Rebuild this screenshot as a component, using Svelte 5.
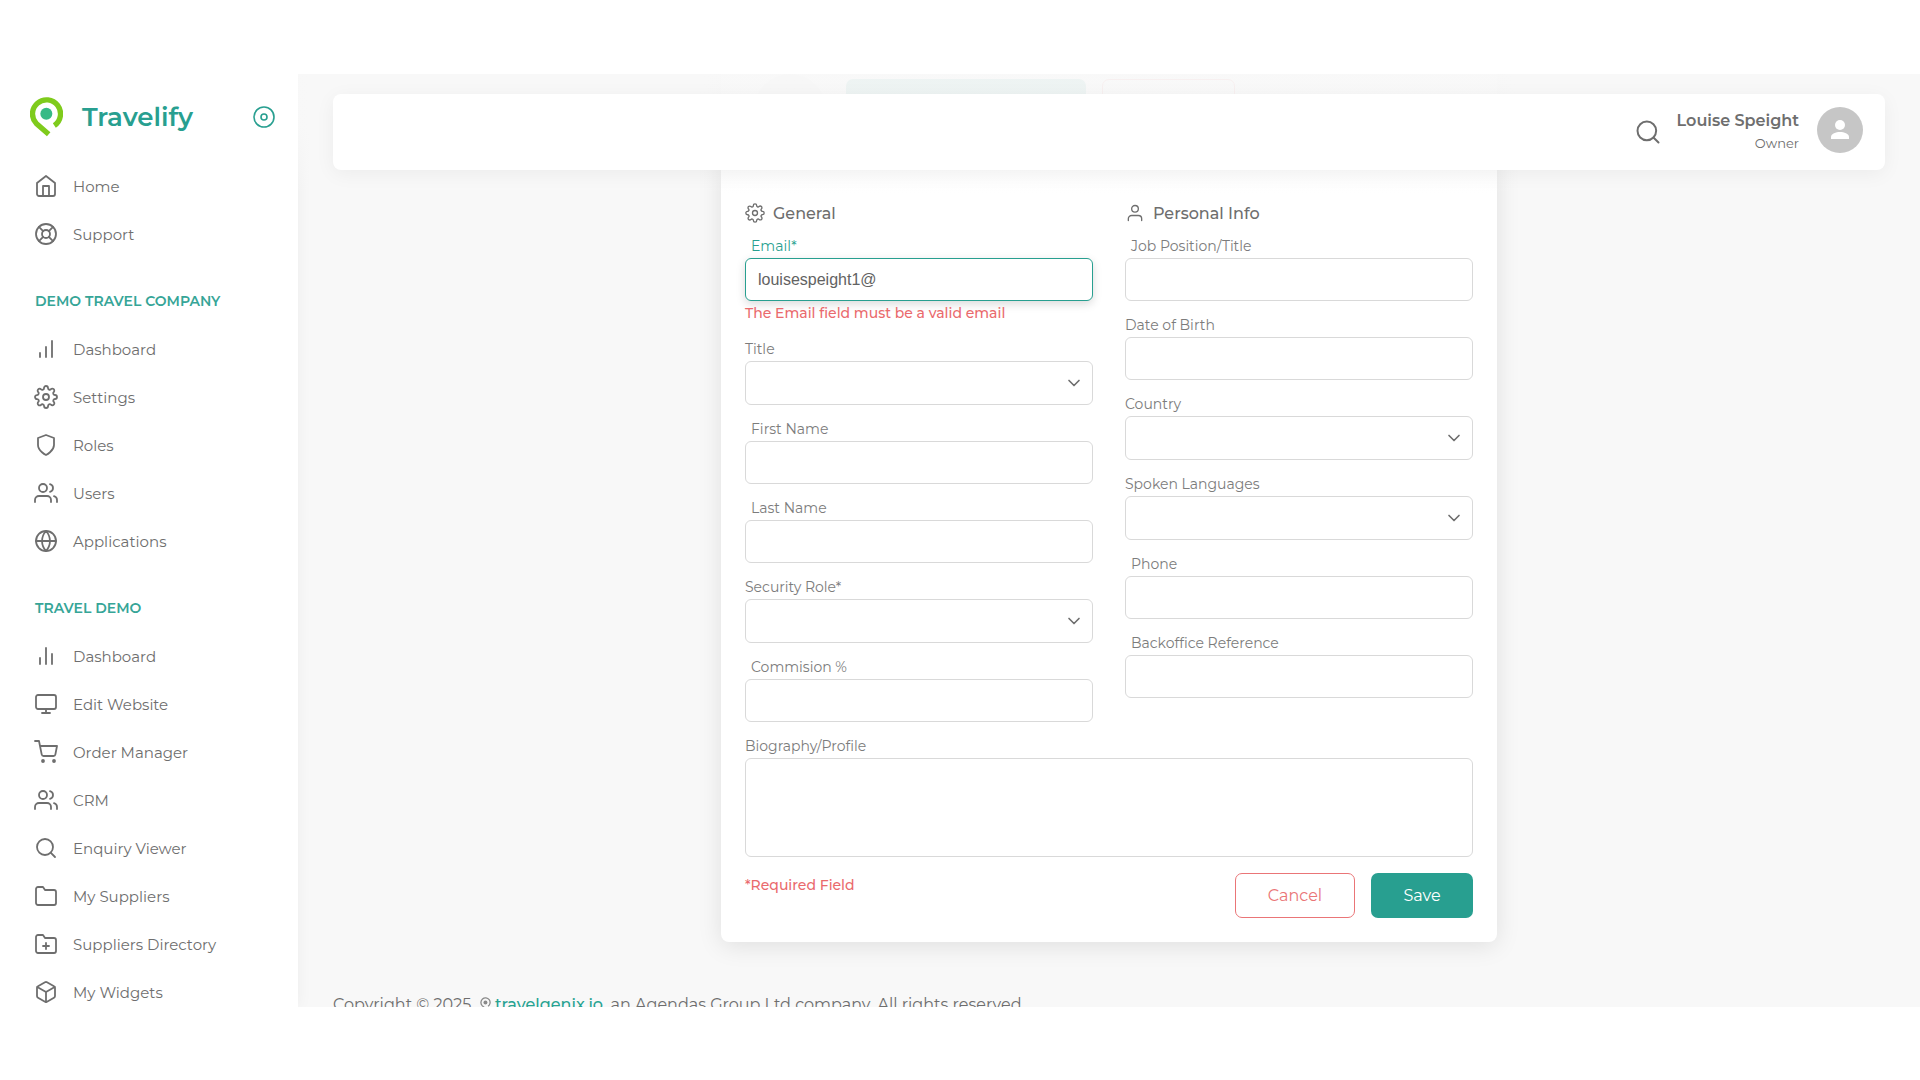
<script>
  const icons = {
    home: '<path d="M3 9l9-7 9 7v11a2 2 0 0 1-2 2H5a2 2 0 0 1-2-2z"/><path d="M9 22V12h6v10"/>',
    support:
      '<circle cx="12" cy="12" r="10"/><circle cx="12" cy="12" r="4"/><path d="M4.93 4.93l4.24 4.24M14.83 14.83l4.24 4.24M14.83 9.17l4.24-4.24M4.93 19.07l4.24-4.24"/>',
    bars: '<path d="M12 20V10M18 20V4M6 20v-4"/>',
    bars2: '<path d="M18 20V10M12 20V4M6 20v-6"/>',
    settings:
      '<circle cx="12" cy="12" r="3"/><path d="M19.4 15a1.65 1.65 0 0 0 .33 1.82l.06.06a2 2 0 0 1 0 2.83 2 2 0 0 1-2.83 0l-.06-.06a1.65 1.65 0 0 0-1.82-.33 1.65 1.65 0 0 0-1 1.51V21a2 2 0 0 1-2 2 2 2 0 0 1-2-2v-.09A1.65 1.65 0 0 0 9 19.4a1.65 1.65 0 0 0-1.82.33l-.06.06a2 2 0 0 1-2.83 0 2 2 0 0 1 0-2.83l.06-.06a1.65 1.65 0 0 0 .33-1.82 1.65 1.65 0 0 0-1.51-1H3a2 2 0 0 1-2-2 2 2 0 0 1 2-2h.09A1.65 1.65 0 0 0 4.6 9a1.65 1.65 0 0 0-.33-1.82l-.06-.06a2 2 0 0 1 0-2.83 2 2 0 0 1 2.83 0l.06.06a1.65 1.65 0 0 0 1.82.33H9a1.65 1.65 0 0 0 1-1.51V3a2 2 0 0 1 2-2 2 2 0 0 1 2 2v.09a1.65 1.65 0 0 0 1 1.51 1.65 1.65 0 0 0 1.82-.33l.06-.06a2 2 0 0 1 2.83 0 2 2 0 0 1 0 2.83l-.06.06a1.65 1.65 0 0 0-.33 1.82V9a1.65 1.65 0 0 0 1.51 1H21a2 2 0 0 1 2 2 2 2 0 0 1-2 2h-.09a1.65 1.65 0 0 0-1.51 1z"/>',
    shield: '<path d="M12 22s8-4 8-10V5l-8-3-8 3v7c0 6 8 10 8 10z"/>',
    users:
      '<path d="M17 21v-2a4 4 0 0 0-4-4H5a4 4 0 0 0-4 4v2"/><circle cx="9" cy="7" r="4"/><path d="M23 21v-2a4 4 0 0 0-3-3.87M16 3.13a4 4 0 0 1 0 7.75"/>',
    globe:
      '<circle cx="12" cy="12" r="10"/><path d="M2 12h20M12 2a15.3 15.3 0 0 1 4 10 15.3 15.3 0 0 1-4 10 15.3 15.3 0 0 1-4-10 15.3 15.3 0 0 1 4-10z"/>',
    monitor: '<rect x="2" y="3" width="20" height="14" rx="2"/><path d="M8 21h8M12 17v4"/>',
    cart: '<circle cx="9" cy="21" r="1"/><circle cx="20" cy="21" r="1"/><path d="M1 1h4l2.68 13.39a2 2 0 0 0 2 1.61h9.72a2 2 0 0 0 2-1.61L23 6H6"/>',
    search: '<circle cx="11" cy="11" r="8"/><path d="M21 21l-4.35-4.35"/>',
    folder: '<path d="M22 19a2 2 0 0 1-2 2H4a2 2 0 0 1-2-2V5a2 2 0 0 1 2-2h5l2 3h9a2 2 0 0 1 2 2z"/>',
    folderPlus:
      '<path d="M22 19a2 2 0 0 1-2 2H4a2 2 0 0 1-2-2V5a2 2 0 0 1 2-2h5l2 3h9a2 2 0 0 1 2 2zM12 11v6M9 14h6"/>',
    box: '<path d="M21 16V8a2 2 0 0 0-1-1.73l-7-4a2 2 0 0 0-2 0l-7 4A2 2 0 0 0 3 8v8a2 2 0 0 0 1 1.73l7 4a2 2 0 0 0 2 0l7-4A2 2 0 0 0 21 16z"/><path d="M3.27 6.96L12 12.01l8.73-5.05M12 22.08V12"/>',
    user: '<path d="M20 21v-2a4 4 0 0 0-4-4H8a4 4 0 0 0-4 4v2"/><circle cx="12" cy="7" r="4"/>',
    disc: '<circle cx="12" cy="12" r="10"/><circle cx="12" cy="12" r="3"/>',
    chevron: '<path d="M6 9l6 6 6-6"/>',
  };

  const nav = [
    {
      title: '',
      items: [
        ['home', 'Home'],
        ['support', 'Support'],
      ],
    },
    {
      title: 'DEMO TRAVEL COMPANY',
      items: [
        ['bars', 'Dashboard'],
        ['settings', 'Settings'],
        ['shield', 'Roles'],
        ['users', 'Users'],
        ['globe', 'Applications'],
      ],
    },
    {
      title: 'TRAVEL DEMO',
      items: [
        ['bars2', 'Dashboard'],
        ['monitor', 'Edit Website'],
        ['cart', 'Order Manager'],
        ['users', 'CRM'],
        ['search', 'Enquiry Viewer'],
        ['folder', 'My Suppliers'],
        ['folderPlus', 'Suppliers Directory'],
        ['box', 'My Widgets'],
      ],
    },
  ];

  const columns = [
    {
      icon: 'settings',
      heading: 'General',
      fields: [
        {
          id: 'email',
          label: 'Email*',
          type: 'text',
          inset: true,
          active: true,
          value: 'louisespeight1@',
          error: 'The Email field must be a valid email',
        },
        { id: 'title', label: 'Title', type: 'select' },
        { id: 'first', label: 'First Name', type: 'text', inset: true },
        { id: 'last', label: 'Last Name', type: 'text', inset: true },
        { id: 'role', label: 'Security Role*', type: 'select' },
        { id: 'commission', label: 'Commision %', type: 'text', inset: true },
      ],
    },
    {
      icon: 'user',
      heading: 'Personal Info',
      fields: [
        { id: 'job', label: 'Job Position/Title', type: 'text', inset: true },
        { id: 'dob', label: 'Date of Birth', type: 'text' },
        { id: 'country', label: 'Country', type: 'select' },
        { id: 'languages', label: 'Spoken Languages', type: 'select' },
        { id: 'phone', label: 'Phone', type: 'text', inset: true },
        { id: 'reference', label: 'Backoffice Reference', type: 'text', inset: true },
      ],
    },
  ];
</script>

{#snippet icon(name)}
  <svg class="icon" viewBox="0 0 24 24" aria-hidden="true">{@html icons[name]}</svg>
{/snippet}

<div class="page">
  <div class="frame">
    <aside class="sidebar">
      <div class="brand">
        <svg class="logo" viewBox="90 110 99 119" aria-hidden="true">
          <path d="M163 195A42 42 0 1 0 109 189L146 221" />
          <circle cx="139" cy="160" r="18" />
        </svg>
        <span class="brand-name">Travelify</span>
        <button class="pin" type="button" aria-label="Collapse menu">{@render icon('disc')}</button>
      </div>
      <nav>
        {#each nav as group}
          {#if group.title}<h2>{group.title}</h2>{/if}
          <ul>
            {#each group.items as [name, label]}
              <li><a href="#top">{@render icon(name)}<span>{label}</span></a></li>
            {/each}
          </ul>
        {/each}
      </nav>
    </aside>

    <div class="main">
      <div class="veil"></div>
      <header class="topbar">
        <button class="search" type="button" aria-label="Search">{@render icon('search')}</button>
        <div class="who">
          <strong>Louise Speight</strong>
          <span>Owner</span>
        </div>
        <svg class="avatar" viewBox="0 0 46 46" aria-hidden="true">
          <circle cx="23" cy="23" r="23" />
          <g>
            <circle cx="23" cy="18" r="5" />
            <path d="M14 32v-2c0-3.500 5-5 9-5s9 1.500 9 5v2z" />
          </g>
        </svg>
      </header>

      <form class="card">
        <div class="media">
          <div class="photo"></div>
          <div class="ghost filled"></div>
          <div class="ghost outlined"></div>
        </div>

        <div class="columns">
          {#each columns as column}
            <section class="column">
              <h3>{@render icon(column.icon)}<span>{column.heading}</span></h3>
              {#each column.fields as field}
                <div class="field" class:active={field.active}>
                  <label for={field.id} class:inset={field.inset}>{field.label}</label>
                  {#if field.type === 'select'}
                    <div class="select">
                      <select id={field.id}><option></option></select>
                      {@render icon('chevron')}
                    </div>
                  {:else}
                    <input id={field.id} type="text" value={field.value ?? ''} />
                  {/if}
                  {#if field.error}<p class="error">{field.error}</p>{/if}
                </div>
              {/each}
            </section>
          {/each}
        </div>

        <div class="field bio">
          <label for="bio">Biography/Profile</label>
          <textarea id="bio"></textarea>
        </div>

        <div class="actions">
          <p class="error">*Required Field</p>
          <button class="cancel" type="button">Cancel</button>
          <button class="save" type="button">Save</button>
        </div>
      </form>

      <footer>
        Copyright © 2025&nbsp;
        <svg class="mark" viewBox="90 110 99 119" aria-hidden="true">
          <path d="M163 195A42 42 0 1 0 109 189L146 221" />
          <circle cx="139" cy="160" r="18" />
        </svg>
        <a href="#top">travelgenix.io</a>, an Agendas Group Ltd company. All rights reserved
      </footer>
    </div>
  </div>
</div>

<style>
  :global(body) {
    background: #fff;
  }
  .page {
    box-sizing: border-box;
    height: 100vh;
    padding: 74px 0 73px;
    font-family: Montserrat, Inter, sans-serif;
    font-size: 14px;
    color: #6e6e6e;
  }
  .page :global(*) {
    box-sizing: border-box;
  }
  .frame {
    display: flex;
    height: 100%;
    overflow: hidden;
    background: #f8f8f8;
  }
  .icon {
    display: block;
    flex: none;
    width: 24px;
    height: 24px;
    fill: none;
    stroke: currentColor;
    stroke-width: 2;
    stroke-linecap: round;
    stroke-linejoin: round;
  }
  button {
    padding: 0;
    border: 0;
    background: none;
    font: inherit;
    color: inherit;
  }
  h2,
  h3,
  p,
  ul {
    margin: 0;
    padding: 0;
    list-style: none;
  }

  .sidebar {
    flex: none;
    width: 298px;
    background: #fff;
    box-shadow: 0 0 15px rgba(0, 0, 0, 0.05);
  }
  .brand {
    display: flex;
    align-items: center;
    height: 88px;
    padding: 0 22px 2px 30px;
  }
  .logo {
    width: 33px;
    height: 40px;
  }
  .logo path,
  .mark path {
    fill: none;
    stroke: #7fcb1c;
    stroke-width: 16;
  }
  .logo circle {
    fill: #36ba86;
  }
  .brand-name {
    flex: 1;
    margin-left: 19px;
    font-size: 26px;
    line-height: 32px;
    font-weight: 600;
    color: #289f90;
  }
  .pin {
    color: #289f90;
  }
  .pin .icon {
    stroke-width: 1.6;
  }
  h2 {
    padding: 33px 35px 14px;
    font-size: 14px;
    line-height: 20px;
    font-weight: 600;
    color: #36a597;
  }
  li a {
    display: flex;
    align-items: center;
    gap: 15px;
    height: 48px;
    padding-left: 34px;
    font-size: 15px;
    color: #6e6e6e;
    text-decoration: none;
  }
  li .icon {
    stroke-width: 1.8;
  }

  .main {
    position: relative;
    flex: 1;
    min-width: 0;
    padding: 0 35px;
  }
  .veil {
    position: absolute;
    inset: 0 0 auto;
    z-index: 1;
    height: 120px;
    background: linear-gradient(
      180deg,
      rgba(248, 248, 248, 0.95) 44%,
      rgba(248, 248, 248, 0.46) 73%,
      rgba(255, 255, 255, 0)
    );
  }
  .topbar {
    position: absolute;
    inset: 20px 35px auto;
    z-index: 2;
    display: flex;
    align-items: center;
    justify-content: flex-end;
    height: 76px;
    padding: 0 22px;
    border-radius: 8px;
    background: #fff;
    box-shadow: 0 4px 20px rgba(0, 0, 0, 0.05);
  }
  .search {
    margin-right: 15px;
  }
  .search .icon {
    width: 28px;
    height: 28px;
    stroke-width: 1.7;
  }
  .who {
    display: grid;
    margin-right: 18px;
    text-align: right;
    font-size: 13px;
    line-height: 22px;
  }
  .who strong {
    font-size: 16px;
    font-weight: 600;
  }
  .avatar {
    width: 46px;
    height: 46px;
    margin-bottom: 4px;
    fill: #c6c6c6;
  }
  .avatar g {
    fill: #fff;
  }

  .card {
    width: 50%;
    margin: 0 auto;
    padding: 0 24px 24px;
    border-radius: 0 0 8px 8px;
    background: #fff;
    box-shadow: 0 4px 25px rgba(0, 0, 0, 0.1);
  }
  .media {
    display: flex;
    height: 127px;
    padding-left: 9px;
  }
  .photo {
    width: 72px;
    height: 72px;
    margin-right: 20px;
    border-radius: 50%;
    background: #e4e4e4;
  }
  .ghost {
    height: 44px;
    margin-top: 5px;
    border-radius: 7px;
  }
  .filled {
    width: 240px;
    margin-right: 16px;
    background: #289f90;
  }
  .outlined {
    width: 133px;
    border: 1px solid #ea5455;
  }
  .columns {
    display: grid;
    grid-template-columns: 1fr 1fr;
    gap: 32px;
  }
  .column {
    display: flex;
    flex-direction: column;
    gap: 16px;
  }
  h3 {
    display: flex;
    align-items: center;
    gap: 8px;
    height: 24px;
    margin-bottom: -3px;
    font-size: 16px;
    font-weight: 500;
  }
  h3 .icon {
    width: 20px;
    height: 20px;
    stroke-width: 1.6;
  }
  label {
    display: block;
    margin-bottom: 4px;
    line-height: 16px;
    color: #7c7c7c;
  }
  .inset {
    padding-left: 6px;
  }
  input,
  select,
  textarea {
    display: block;
    width: 100%;
    height: 43px;
    padding: 0 12px;
    border: 1px solid #d9d9d9;
    border-radius: 6px;
    outline: 0;
    background: #fff;
    font-family: 'Liberation Sans', Arial, sans-serif;
    font-size: 16px;
    color: #626262;
  }
  .active label {
    color: #289f90;
  }
  .active input {
    border-color: #289f90;
    box-shadow: 0 3px 10px rgba(0, 0, 0, 0.15);
  }
  .error {
    line-height: 24px;
    font-weight: 500;
    color: #ea6a6d;
  }
  .select {
    display: grid;
    align-items: center;
  }
  .select > :global(*) {
    grid-area: 1 / 1;
  }
  select {
    height: 44px;
    appearance: none;
  }
  .select .icon {
    justify-self: end;
    width: 20px;
    height: 20px;
    margin-right: 9px;
    pointer-events: none;
  }
  .bio {
    margin-top: 16px;
  }
  textarea {
    height: 99px;
    padding: 12px;
    resize: none;
  }
  .actions {
    display: flex;
    gap: 16px;
    margin-top: 16px;
  }
  .actions p {
    flex: 1;
  }
  .actions button {
    height: 45px;
    border-radius: 7px;
    font-size: 16px;
  }
  .actions .cancel {
    width: 120px;
    border: 1px solid #ea7577;
    color: #ea7577;
  }
  .actions .save {
    width: 102px;
    background: #289f90;
    color: #fff;
  }

  footer {
    margin-top: 51px;
    font-size: 16px;
    line-height: 24px;
    white-space: nowrap;
  }
  footer a {
    font-weight: 500;
    color: #28a392;
    text-decoration: none;
  }
  .mark {
    width: 11px;
    height: 13px;
  }
  .mark path {
    stroke: #8a8a8a;
    stroke-width: 12;
  }
  .mark circle {
    fill: #8a8a8a;
  }
</style>
